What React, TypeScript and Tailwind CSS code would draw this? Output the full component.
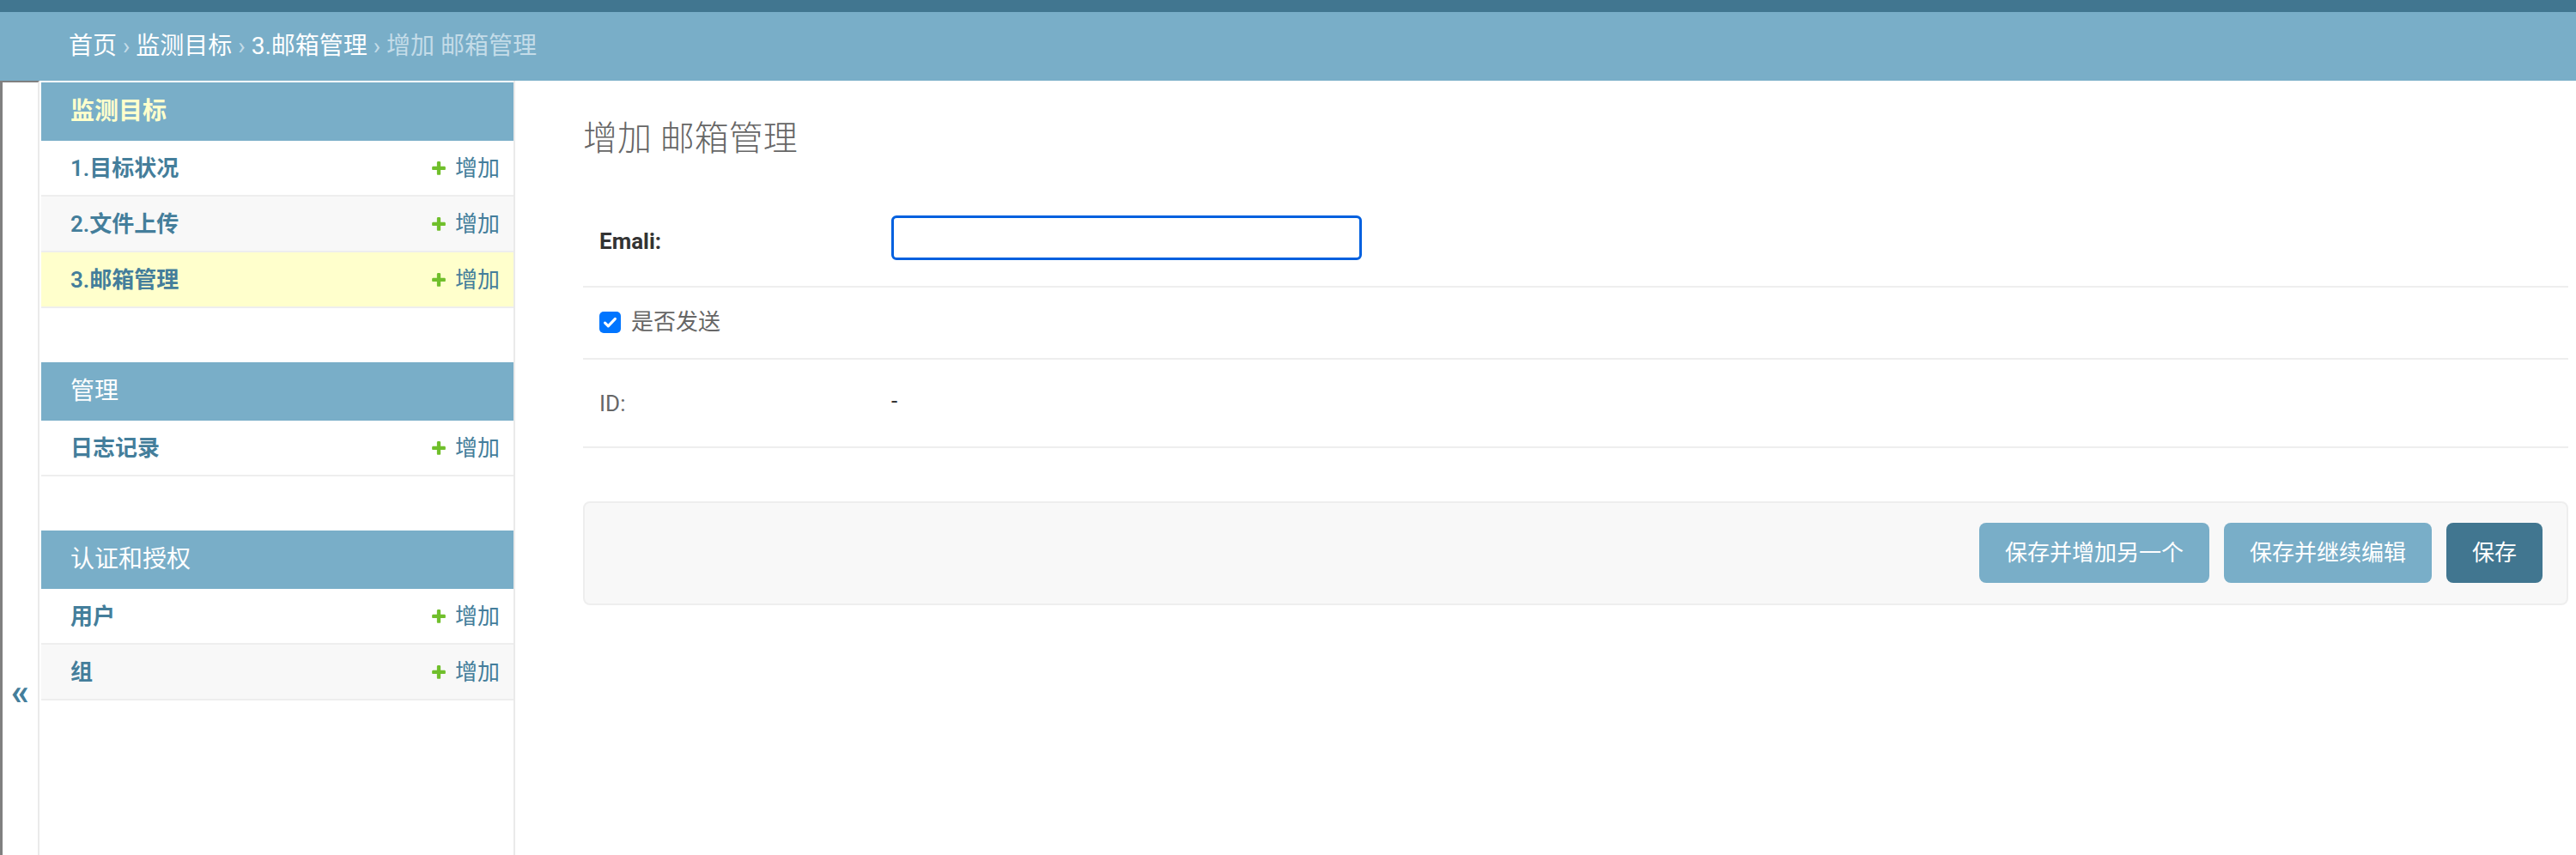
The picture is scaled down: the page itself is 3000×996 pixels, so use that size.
import React from "react";

const font = { fontFamily: 'Roboto, "Noto Sans CJK SC", sans-serif' };

const AddIcon = () => (
  <svg width="20" height="20" viewBox="0 0 1792 1792" className="shrink-0">
    <path
      fill="#70bf2b"
      d="M1600 796v192q0 40-28 68t-68 28h-416v416q0 40-28 68t-68 28h-192q-40 0-68-28t-28-68v-416h-416q-40 0-68-28t-28-68v-192q0-40 28-68t68-28h416v-416q0-40 28-68t68-28h192q40 0 68 28t28 68v416h416q40 0 68 28t28 68z"
    />
  </svg>
);

type Model = { name: string; current?: boolean };
type AppModule = { title: string; current?: boolean; models: Model[] };

const modules: AppModule[] = [
  {
    title: "监测目标",
    current: true,
    models: [{ name: "1.目标状况" }, { name: "2.文件上传" }, { name: "3.邮箱管理", current: true }],
  },
  { title: "管理", models: [{ name: "日志记录" }] },
  { title: "认证和授权", models: [{ name: "用户" }, { name: "组" }] },
];

const SidebarModule = ({ mod }: { mod: AppModule }) => (
  <div className="mb-[63px]">
    <div
      className={`h-[68px] flex items-center pl-[34px] bg-[#79aec8] text-[28px] leading-[36px] ${
        mod.current ? "text-[#ffffcc] font-bold" : "text-white"
      }`}
    >
      {mod.title}
    </div>
    {mod.models.map((m, i) => (
      <div
        key={m.name}
        className={`h-[65px] flex items-center justify-between pl-[34px] pr-[16px] border-b-2 border-[#eeeeee] text-[26px] leading-[32px] text-[#447e9b] ${
          m.current ? "bg-[#ffffcc]" : i % 2 === 1 ? "bg-[#f8f8f8]" : "bg-white"
        }`}
      >
        <span className="font-semibold">{m.name}</span>
        <span className="flex items-center gap-[9px]">
          <AddIcon />
          增加
        </span>
      </div>
    ))}
  </div>
);

export default function App() {
  return (
    <div className="w-[3000px] h-[996px] overflow-hidden bg-white flex flex-col" style={font}>
      <div className="h-[14px] bg-[#417690]" />
      <div className="bg-[#79aec8] pl-[80px] py-[20px] leading-[40px] text-[28px] text-[#c4dce8]">
        <span className="text-white">首页</span> › <span className="text-white">监测目标</span> ›{" "}
        <span className="text-white">3.邮箱管理</span> › 增加 邮箱管理
      </div>

      <div className="flex flex-1">
        <div className="w-[46px] shrink-0 border-l-[3px] border-t-2 border-[#808080] border-r-2 border-r-[#eaeaea] flex justify-center pt-[691px]">
          <span className="text-[42px] leading-[40px] font-bold text-[#447e9b]">«</span>
        </div>

        <div className="w-[554px] shrink-0 border-r-2 border-[#eaeaea] pt-[2px] pl-[2px]">
          {modules.map((m) => (
            <SidebarModule key={m.title} mod={m} />
          ))}
        </div>

        <div className="flex-1 pl-[79px] pr-[9px] pt-[44px]">
          <h1 className="text-[40px] leading-[48px] font-light text-[#666666] mb-[45px]">增加 邮箱管理</h1>

          <div className="border-b-2 border-[#eeeeee] pl-[19px] pt-[20px] pb-[26px] flex items-start">
            <label className="w-[340px] shrink-0 mt-[4px] leading-[52px] text-[26px] font-bold text-[#333333]">
              Emali:
            </label>
            <input
              type="text"
              className="w-[548px] h-[52px] border-[3px] border-[#0060df] rounded-[6px] outline-none px-[10px] text-[26px]"
            />
          </div>

          <div className="border-b-2 border-[#eeeeee] pl-[19px] pt-[19px] pb-[21px] flex items-center h-[84px]">
            <div className="w-[25px] h-[25px] rounded-[5px] bg-[#0075ff] flex items-center justify-center">
              <svg width="19" height="19" viewBox="0 0 16 16">
                <path d="M3 8.5l3.2 3.2L13 4.5" fill="none" stroke="white" strokeWidth="2.6" strokeLinecap="round" strokeLinejoin="round" />
              </svg>
            </div>
            <label className="ml-[12px] text-[26px] leading-[32px] text-[#666666]">是否发送</label>
          </div>

          <div className="border-b-2 border-[#eeeeee] pl-[19px] py-[20px] flex items-center h-[103px]">
            <label className="w-[340px] shrink-0 text-[26px] leading-[32px] text-[#666666]">ID:</label>
            <div className="text-[26px] leading-[32px] text-[#333333] -mt-[6px]">-</div>
          </div>

          <div className="mt-[62px] border-2 border-[#eeeeee] rounded-[8px] bg-[#f8f8f8] pt-[23px] pb-[24px] pr-[28px] flex justify-end gap-[17px]">
            <button className="h-[70px] px-[30px] rounded-[8px] bg-[#79aec8] text-white text-[26px]">保存并增加另一个</button>
            <button className="h-[70px] px-[30px] rounded-[8px] bg-[#79aec8] text-white text-[26px]">保存并继续编辑</button>
            <button className="h-[70px] px-[30px] rounded-[8px] bg-[#417690] text-white text-[26px]">保存</button>
          </div>
        </div>
      </div>
    </div>
  );
}
